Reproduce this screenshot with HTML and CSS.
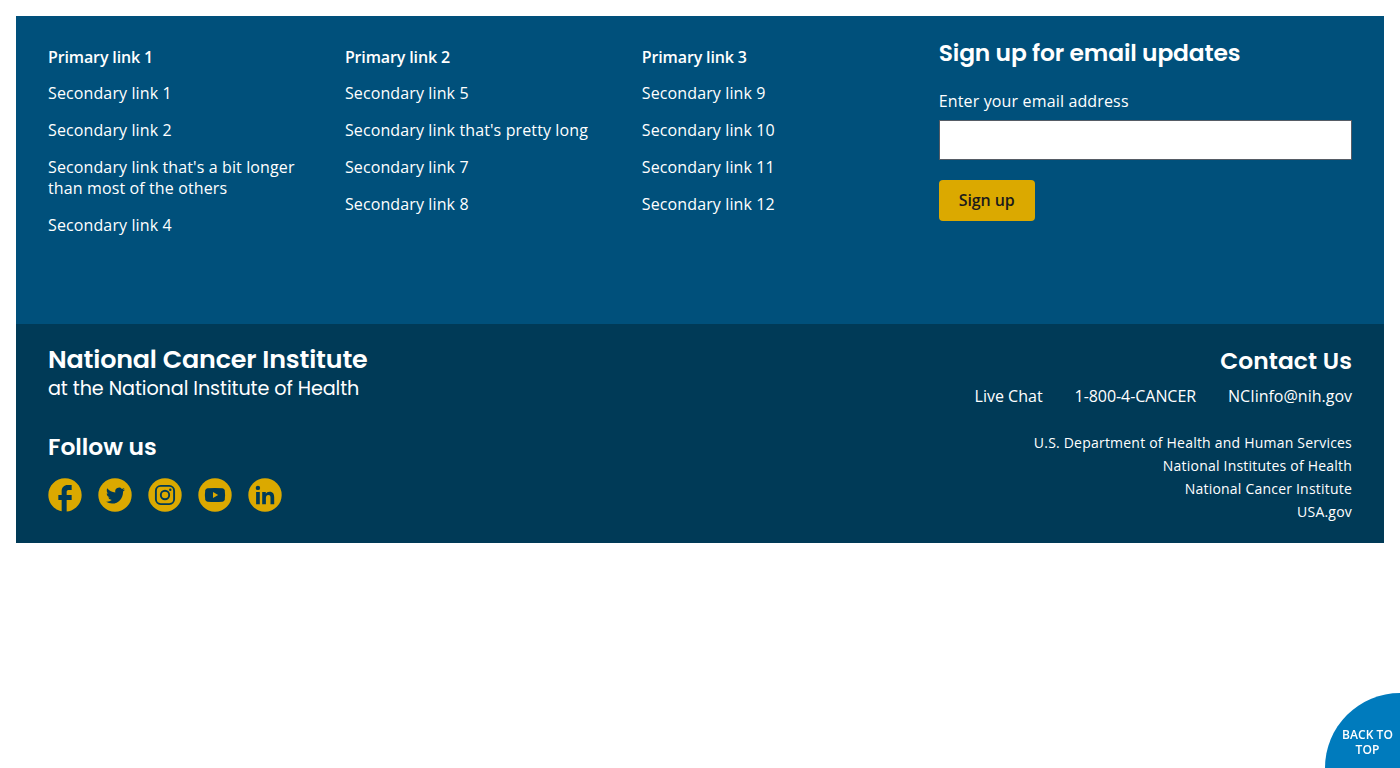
FILE: index.html
```html
<!DOCTYPE html>
<html lang="en">
<head>
<meta charset="utf-8">
<title>National Cancer Institute</title>
<link rel="stylesheet" href="styles.css">
</head>
<body>
<footer class="footer">
  <div class="footer-primary">
    <nav class="link-column">
      <h3 class="column-title">Primary link 1</h3>
      <ul class="link-list">
        <li><a href="#">Secondary link 1</a></li>
        <li><a href="#">Secondary link 2</a></li>
        <li><a href="#">Secondary link that's a bit longer than most of the others</a></li>
        <li><a href="#">Secondary link 4</a></li>
      </ul>
    </nav>
    <nav class="link-column">
      <h3 class="column-title">Primary link 2</h3>
      <ul class="link-list">
        <li><a href="#">Secondary link 5</a></li>
        <li><a href="#">Secondary link that's pretty long</a></li>
        <li><a href="#">Secondary link 7</a></li>
        <li><a href="#">Secondary link 8</a></li>
      </ul>
    </nav>
    <nav class="link-column">
      <h3 class="column-title">Primary link 3</h3>
      <ul class="link-list">
        <li><a href="#">Secondary link 9</a></li>
        <li><a href="#">Secondary link 10</a></li>
        <li><a href="#">Secondary link 11</a></li>
        <li><a href="#">Secondary link 12</a></li>
      </ul>
    </nav>
    <form class="signup">
      <h3 class="heading signup-title">Sign up for email updates</h3>
      <label class="signup-label" for="email">Enter your email address</label>
      <input class="signup-input" id="email" type="email">
      <button class="signup-button" type="button">Sign up</button>
    </form>
  </div>
  <div class="footer-secondary">
    <div class="identity">
      <p class="heading agency">National Cancer Institute</p>
      <p class="parent-agency">at the National Institute of Health</p>
      <h3 class="heading follow-title">Follow us</h3>
      <div class="social">
        <a href="#" aria-label="Facebook"><svg class="social-icon" viewBox="1.8 1.8 20.4 20.4"><path class="disc" d="M22 12c0-5.52-4.48-10-10-10S2 6.48 2 12c0 4.84 3.44 8.87 8 9.8V15H8v-3h2V9.5C10 7.57 11.57 6 13.5 6H16v3h-2c-.55 0-1 .45-1 1v2h3v3h-3v6.95c5.05-.5 9-4.76 9-9.95z"/></svg></a>
        <a href="#" aria-label="Twitter"><svg class="social-icon" viewBox="0 0 34 34"><circle class="disc" cx="17" cy="17" r="16.7"/><path class="mark" transform="translate(8 9.4) scale(.79 .82)" d="M23.953 2.57a10 10 0 0 1-2.825.775 4.958 4.958 0 0 0 2.163-2.723c-.951.555-2.005.959-3.127 1.184a4.92 4.92 0 0 0-8.384 4.482C7.69 6.095 4.067 4.13 1.64 1.162a4.822 4.822 0 0 0-.666 2.475c0 1.71.87 3.213 2.188 4.096a4.904 4.904 0 0 1-2.228-.616v.06a4.923 4.923 0 0 0 3.946 4.827 4.996 4.996 0 0 1-2.212.085 4.936 4.936 0 0 0 4.604 3.417 9.867 9.867 0 0 1-6.102 2.105c-.39 0-.779-.023-1.17-.067a13.995 13.995 0 0 0 7.557 2.209c9.053 0 13.998-7.496 13.998-13.985 0-.21 0-.42-.015-.63a9.935 9.935 0 0 0 2.46-2.548z"/></svg></a>
        <a href="#" aria-label="Instagram"><svg class="social-icon" viewBox="0 0 34 34"><circle class="disc" cx="17" cy="17" r="16.7"/><rect class="line" x="7.9" y="7.9" width="18.2" height="18.2" rx="4.8"/><circle class="line" cx="17" cy="17" r="4.2"/><circle class="mark" cx="22.3" cy="11.7" r="1.2"/></svg></a>
        <a href="#" aria-label="YouTube"><svg class="social-icon" viewBox="0 0 34 34"><circle class="disc" cx="17" cy="17" r="16.7"/><path class="mark" d="M9.5 10.3Q17 9.7 24.5 10.3Q26.500 10.5 26.8 12.5Q27.4 17 26.8 21.5Q26.5 23.5 24.5 23.7Q17 24.3 9.5 23.7Q7.5 23.5 7.2 21.5Q6.6 17 7.2 12.5Q7.5 10.5 9.5 10.3Z"/><path class="disc" d="M15 14.1V19.9L20.2 17Z"/></svg></a>
        <a href="#" aria-label="LinkedIn"><svg class="social-icon" viewBox="0 0 34 34"><circle class="disc" cx="17" cy="17" r="16.7"/><circle class="mark" cx="9.9" cy="9.9" r="2.2"/><path class="mark" d="M8.1 14.1H11.800V26.2H8.1ZM14.2 14.1H17.8V15.8C18.5 14.6 19.7 13.8 21.5 13.8C25.2 13.8 26.2 16.2 26.2 19.5V26.2H22.5V20.3C22.5 18.6 22.4 17.1 20.4 17.1C18.4 17.1 17.9 18.5 17.9 20.2V26.2H14.2Z"/></svg></a>
      </div>
    </div>
    <div class="contact">
      <h3 class="heading contact-title">Contact Us</h3>
      <div class="contact-links">
        <a href="#">Live Chat</a>
        <a class="phone" href="#">1-800-4-CANCER</a>
        <a href="#">NCIinfo@nih.gov</a>
      </div>
      <ul class="affiliates">
        <li><a href="#">U.S. Department of Health and Human Services</a></li>
        <li><a href="#">National Institutes of Health</a></li>
        <li><a href="#">National Cancer Institute</a></li>
        <li><a href="#">USA.gov</a></li>
      </ul>
    </div>
  </div>
</footer>
<a class="back-to-top" href="#">BACK TO TOP</a>
</body>
</html>
```
FILE: styles.css
```css
* { box-sizing: border-box; }
body {
  margin: 0;
  padding: 16px;
  background: #fff;
  color: #fff;
  font: 16px/21px "Open Sans", sans-serif;
}
h3, p, ul { margin: 0; padding: 0; }
ul { list-style: none; }
a { color: inherit; text-decoration: none; }
.footer-primary {
  display: grid;
  grid-template-columns: repeat(3, 264.9px) 1fr;
  column-gap: 32px;
  height: 308px;
  padding: 22px 32px 0;
  background: #00507b;
}
.link-column { padding-top: 9px; }
.column-title {
  font-size: 16px;
  font-weight: 600;
  line-height: 21px;
  letter-spacing: -.13px;
}
.link-list {
  display: flex;
  flex-direction: column;
  gap: 16px;
  padding-top: 15px;
  letter-spacing: .12px;
}
.heading {
  font-family: Poppins, Inter, sans-serif;
  font-weight: 600;
  white-space: nowrap;
}
.signup-title { font-size: 23.4px; line-height: 30px; letter-spacing: -.14px; }
.signup-label { display: block; padding-top: 23px; letter-spacing: .15px; }
.signup-input {
  display: block;
  width: 100%;
  height: 40px;
  margin-top: 8px;
  border: 1px solid #565c65;
  border-radius: 0;
  background: #fff;
}
.signup-button {
  display: block;
  width: 96px;
  height: 41px;
  margin-top: 20px;
  padding: 0;
  border: 0;
  border-radius: 4px;
  background: #dba900;
  color: #1b1b1b;
  font: 600 16px/21px "Open Sans", sans-serif;
  letter-spacing: -.1px;
}
.footer-secondary {
  display: flex;
  justify-content: space-between;
  height: 219px;
  padding: 20px 32px 0;
  background: #003a57;
}
.agency { font-size: 25.4px; line-height: 31px; letter-spacing: -.16px; }
.parent-agency {
  font: 400 19.2px/27px Poppins, Inter, sans-serif;
  letter-spacing: -.1px;
  white-space: nowrap;
}
.follow-title { padding-top: 30px; font-size: 23.4px; line-height: 30px; }
.social { display: flex; gap: 16px; padding-top: 16px; }
.social-icon { display: block; width: 34px; height: 34px; }
.disc { fill: #dba900; }
.mark { fill: #003a57; }
.line { fill: none; stroke: #003a57; stroke-width: 1.9; }
.contact {
  display: flex;
  flex-direction: column;
  align-items: flex-end;
}
.contact-title {
  padding-top: 2px;
  font-size: 23.4px;
  line-height: 30px;
  letter-spacing: .08px;
}
.contact-links { display: flex; gap: 32px; padding-top: 10px; }
.phone { letter-spacing: -.06px; }
.affiliates {
  padding-top: 24px;
  font-size: 14px;
  line-height: 23px;
  letter-spacing: .21px;
  text-align: right;
}
.back-to-top {
  position: fixed;
  right: 0;
  bottom: 0;
  width: 75px;
  height: 75px;
  padding: 34px 5px 0 15px;
  border-top-left-radius: 75px;
  background: #007bbd;
  font-size: 12px;
  font-weight: 600;
  line-height: 15px;
  letter-spacing: .08px;
  text-align: center;
}
```
